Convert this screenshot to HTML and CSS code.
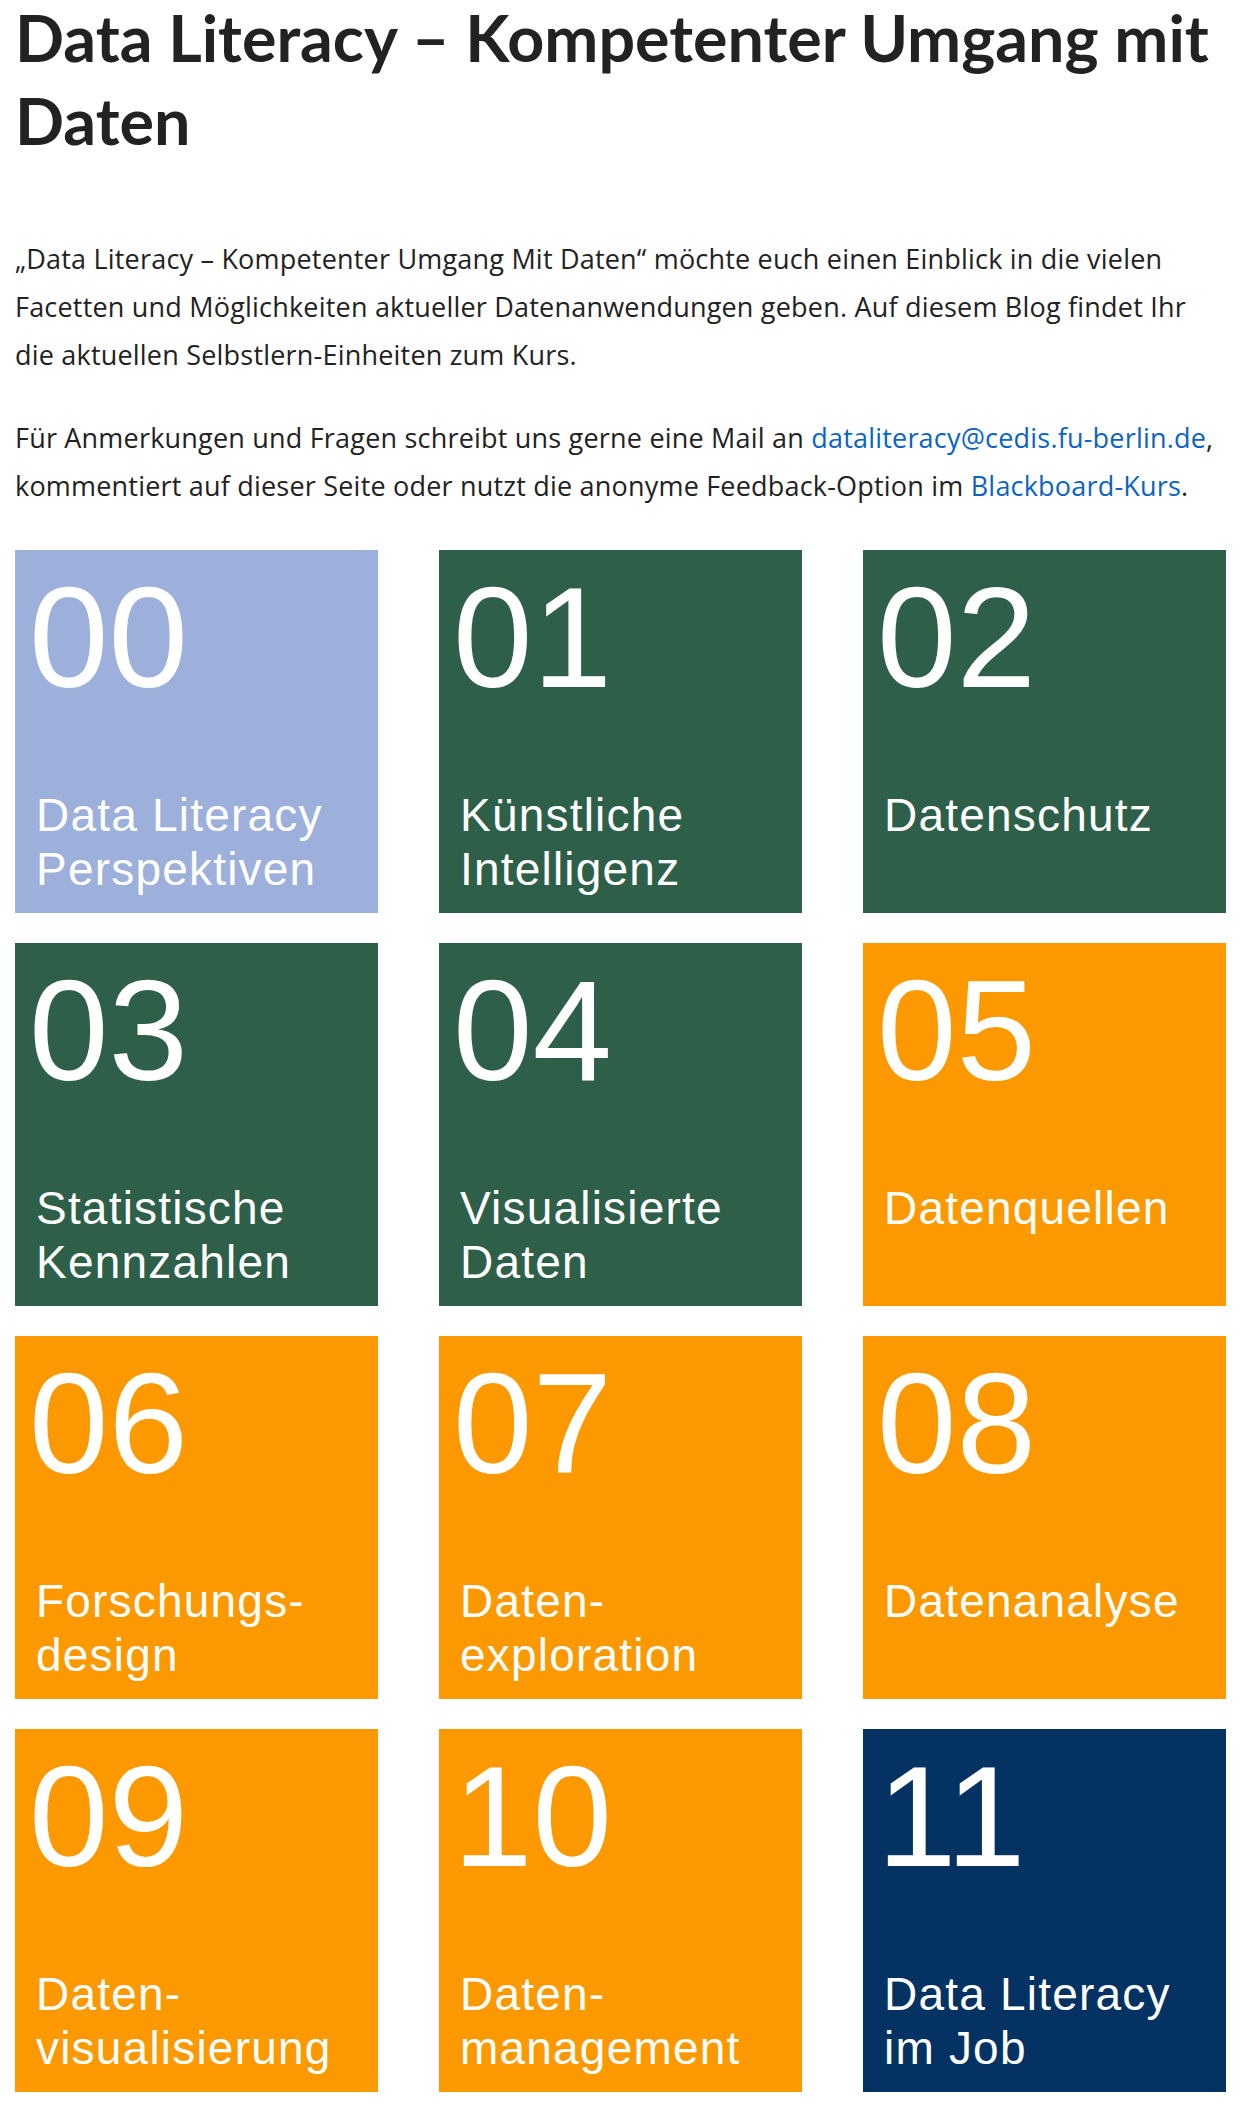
FILE: index.html
```html
<!DOCTYPE html>
<html lang="de">
<head>
<meta charset="utf-8">
<title>Data Literacy – Kompetenter Umgang mit Daten</title>
<link rel="stylesheet" href="styles.css">
</head>
<body>
<main class="page">
  <h1 class="title">Data Literacy – Kompetenter Umgang mit Daten</h1>
  <div class="intro">
    <p class="para">„Data Literacy – Kompetenter Umgang Mit Daten“ möchte euch einen Einblick in die vielen<br>Facetten und Möglichkeiten aktueller Datenanwendungen geben. Auf diesem Blog findet Ihr<br>die aktuellen Selbstlern-Einheiten zum Kurs.</p>
    <p class="para">Für Anmerkungen und Fragen schreibt uns gerne eine Mail an <a class="link" href="#">dataliteracy@cedis.fu-berlin.de</a>,<br>kommentiert auf dieser Seite oder nutzt die anonyme Feedback-Option im <a class="link" href="#">Blackboard-Kurs</a>.</p>
  </div>
  <div class="tiles">
    <a class="tile tile-blue" href="#"><span class="num">00</span><span class="label">Data Literacy<br>Perspektiven</span></a>
    <a class="tile tile-green" href="#"><span class="num">01</span><span class="label">Künstliche<br>Intelligenz</span></a>
    <a class="tile tile-green" href="#"><span class="num">02</span><span class="label">Datenschutz</span></a>
    <a class="tile tile-green" href="#"><span class="num">03</span><span class="label">Statistische<br>Kennzahlen</span></a>
    <a class="tile tile-green" href="#"><span class="num">04</span><span class="label">Visualisierte<br>Daten</span></a>
    <a class="tile tile-orange" href="#"><span class="num">05</span><span class="label">Datenquellen</span></a>
    <a class="tile tile-orange" href="#"><span class="num">06</span><span class="label">Forschungs-<br>design</span></a>
    <a class="tile tile-orange" href="#"><span class="num">07</span><span class="label">Daten-<br>exploration</span></a>
    <a class="tile tile-orange" href="#"><span class="num">08</span><span class="label">Datenanalyse</span></a>
    <a class="tile tile-orange" href="#"><span class="num">09</span><span class="label">Daten-<br>visualisierung</span></a>
    <a class="tile tile-orange" href="#"><span class="num">10</span><span class="label">Daten-<br>management</span></a>
    <a class="tile tile-navy" href="#"><span class="num">11</span><span class="label">Data Literacy<br>im Job</span></a>
  </div>
</main>
</body>
</html>
```
FILE: styles.css
```css
html, body {
  margin: 0;
  padding: 0;
  background: #ffffff;
}

.page {
  width: 1211px;
  padding: 0 15px;
  color: #222222;
}

.title {
  margin: -4px 0 0;
  font-family: Lato, "Liberation Sans", sans-serif;
  font-weight: 700;
  font-size: 64.6px;
  line-height: 83px;
  color: #222222;
}

.intro {
  margin-top: 73px;
}

.para {
  margin: 0 0 35px;
  font-family: "Open Sans", "Liberation Sans", sans-serif;
  font-size: 27px;
  line-height: 48px;
  letter-spacing: 0.2px;
  white-space: nowrap;
  color: #222222;
}

.para:last-child {
  margin-bottom: 0;
}

.link {
  color: #0b63c6;
  text-decoration: none;
}

.tiles {
  display: grid;
  grid-template-columns: repeat(3, 363px);
  grid-auto-rows: 363px;
  column-gap: 61px;
  row-gap: 30px;
  margin-top: 40px;
}

.tile {
  display: flex;
  flex-direction: column;
  padding: 13px 0 0 14px;
  color: #ffffff;
  text-decoration: none;
  font-family: "Liberation Sans", Arial, sans-serif;
  overflow: hidden;
}

.num {
  font-size: 143px;
  line-height: 150px;
  height: 150px;
}

.label {
  margin-top: 75px;
  padding-left: 7px;
  font-size: 46px;
  line-height: 54px;
  letter-spacing: 1.2px;
}

.tile-blue { background: #9db0db; }
.tile-green { background: #2e5f49; }
.tile-orange { background: #fc9900; }
.tile-navy { background: #033263; }
```
